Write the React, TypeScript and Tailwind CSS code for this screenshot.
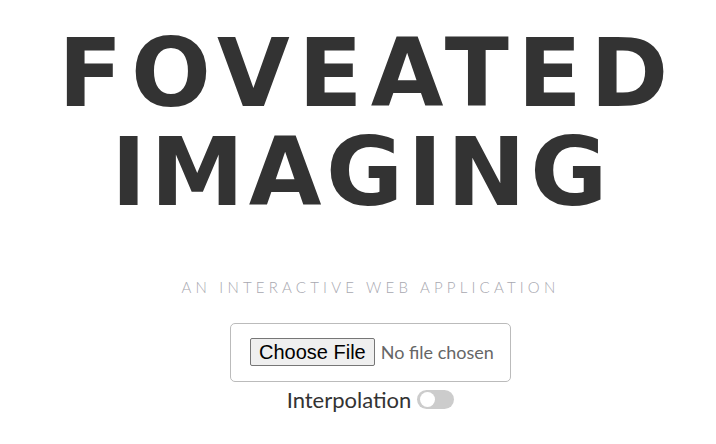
import React from "react";

export default function App() {
  return (
    <div className="min-h-screen bg-white flex flex-col items-center pl-[25px] font-['Lato',sans-serif] text-[#333]">
      <h1 className="mt-[24px] pr-[6px] text-center font-['DejaVu_Sans',sans-serif] font-bold text-[94px] leading-[99px] text-[#333] uppercase">
        <div className="tracking-[8.5px]">FOVEATED</div>
        <div className="tracking-[4.5px] pr-[12px]">IMAGING</div>
      </h1>
      <p className="mt-[54px] text-[15px] font-light tracking-[4.2px] text-[#a8a8b0] uppercase">
        An interactive web application
      </p>
      <div className="mt-[24px] border border-[#bbb] rounded-[5px] w-[281px] h-[59px] flex items-center pl-[19px]">
        <input
          type="file"
          className="text-[18px] text-[#666] font-['Lato',sans-serif] file:font-['Liberation_Sans',sans-serif] file:text-[20px] file:leading-[24px] file:text-black file:bg-[#efefef] file:border file:border-[#767676] file:rounded-[2px] file:px-[8px] file:py-[1px] file:mr-[6px]"
        />
      </div>
      <div className="mt-[1px] flex items-center gap-[6px]">
        <span className="text-[22px] text-[#333]">Interpolation</span>
        <div className="w-[37px] h-[19px] rounded-full bg-[#ccc] flex items-center pl-[3px]">
          <div className="w-[15px] h-[15px] rounded-full bg-white" />
        </div>
      </div>
    </div>
  );
}
